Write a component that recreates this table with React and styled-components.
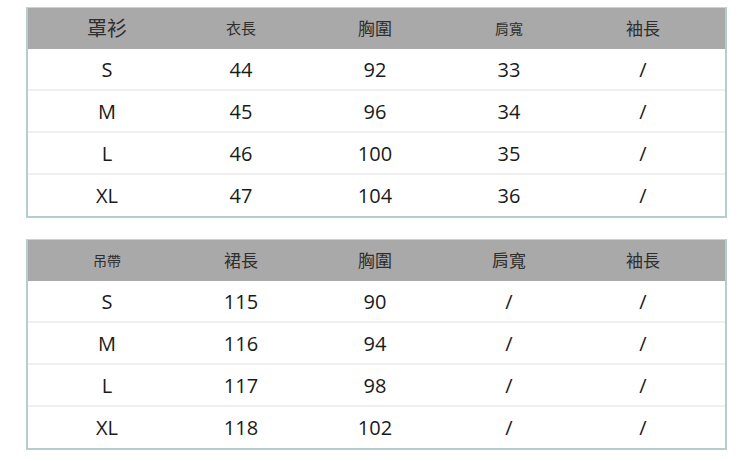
import React from 'react';
import styled, { createGlobalStyle } from 'styled-components';

const GlobalStyle = createGlobalStyle`
    body {
        margin: 0;
        background: #fff;
        font-family: "Open Sans", "Noto Sans CJK TC", sans-serif;
    }
`;

const tables = [
    {
        head: [
            { text: '罩衫', size: 20 },
            { text: '衣長', size: 15 },
            { text: '胸圍', size: 17 },
            { text: '肩寬', size: 14 },
            { text: '袖長', size: 17 },
        ],
        rows: [
            ['S', '44', '92', '33', '/'],
            ['M', '45', '96', '34', '/'],
            ['L', '46', '100', '35', '/'],
            ['XL', '47', '104', '36', '/'],
        ],
    },
    {
        head: [
            { text: '吊帶', size: 14 },
            { text: '裙長', size: 17 },
            { text: '胸圍', size: 17 },
            { text: '肩寬', size: 17 },
            { text: '袖長', size: 17 },
        ],
        rows: [
            ['S', '115', '90', '/', '/'],
            ['M', '116', '94', '/', '/'],
            ['L', '117', '98', '/', '/'],
            ['XL', '118', '102', '/', '/'],
        ],
    },
];

function SizeTable({ head, rows }) {
    return (
        <Table>
            <HeadRow>
                {head.map(h => <HeadCell key={h.text} size={h.size}>{h.text}</HeadCell>)}
            </HeadRow>
            {rows.map((row, i) => (
                <Row key={row[0]} last={i === rows.length - 1}>
                    {row.map((cell, j) => <Cell key={j}>{cell}</Cell>)}
                </Row>
            ))}
        </Table>
    );
}

export default function App() {
    return (
        <Page>
            <GlobalStyle />
            {tables.map((t, i) => <SizeTable key={i} head={t.head} rows={t.rows} />)}
        </Page>
    );
}

const Page = styled.div`
    width: 750px;
    height: 461px;
    padding: 7px 0 0 26px;
    box-sizing: border-box;
    display: flex;
    flex-direction: column;
    gap: 21px;
`;

const Table = styled.div`
    width: 701px;
    box-sizing: border-box;
    border: 2px solid #b7cdcd;
    border-top: 1px solid #d0d0d0;
`;

const HeadRow = styled.div`
    display: grid;
    grid-template-columns: repeat(5, 134px);
    padding: 0 15px 2px 12px;
    height: 41px;
    box-sizing: border-box;
    background: #a9a9a9;
    align-items: center;
`;

const HeadCell = styled.div`
    text-align: center;
    font-size: ${p => p.size}px;
    color: #2e2e2e;
    font-family: "Noto Sans CJK TC", sans-serif;
`;

const Row = styled.div`
    display: grid;
    grid-template-columns: repeat(5, 134px);
    padding: 0 15px 0 12px;
    height: ${p => (p.last ? 41 : 40)}px;
    border-bottom: ${p => (p.last ? 'none' : '2px solid #efefef')};
    align-items: center;
`;

const Cell = styled.div`
    text-align: center;
    font-size: 20px;
    color: #1a1a1a;
`;
